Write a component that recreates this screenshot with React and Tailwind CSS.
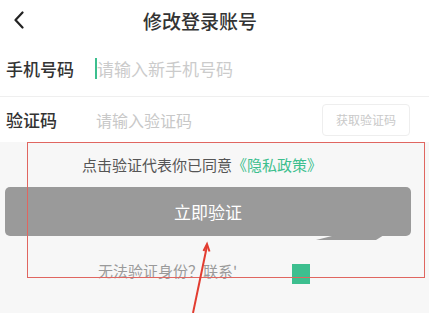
export default function App() {
  const font = { fontFamily: '"Noto Sans CJK SC", "Noto Sans", sans-serif' };
  return (
    <div className="relative w-[429px] h-[313px] overflow-hidden bg-[#f7f7f7]" style={font}>
      <div className="bg-white">
        <div className="h-[40px] flex items-center">
          <svg width="12" height="18" viewBox="0 0 12 18" className="ml-[13px]">
            <path d="M9.5 1.5 L2.5 9 L9.5 16.5" fill="none" stroke="#222" strokeWidth="2.2" strokeLinecap="round" strokeLinejoin="round" />
          </svg>
          <div className="ml-[118px] text-[19px] leading-none font-medium text-[#333]">修改登录账号</div>
        </div>
        <div className="h-[56px] flex items-center">
          <div className="pl-[6px] w-[95px] text-[17px] leading-none font-medium text-[#333]">手机号码</div>
          <div className="w-[2px] h-[21px] bg-[#3cbf8e]"></div>
          <div className="text-[17px] leading-none text-[#cbcbcb]">请输入新手机号码</div>
        </div>
        <div className="h-px bg-[#efefef]"></div>
        <div className="h-[45px] flex items-center">
          <div className="pl-[6px] w-[96px] text-[17px] leading-none font-medium text-[#333]">验证码</div>
          <div className="text-[16px] leading-none text-[#c8c8c8]">请输入验证码</div>
          <div className="ml-auto mr-[19px] w-[88px] h-[32px] rounded-[4px] border border-[#eeeeee] flex items-center justify-center text-[12px] text-[#c9c9c9]">获取验证码</div>
        </div>
      </div>
      <div className="pt-[11px]">
        <div className="pl-[82px] h-[22px] flex items-center text-[15px] leading-none text-[#555]">
          点击验证代表你已同意<span className="text-[#3cbf8e]">《隐私政策》</span>
        </div>
        <div className="relative mt-[12px] ml-[5px] mr-[18px] h-[49px] rounded-[5px] bg-[#9a9a9a] flex items-center justify-center text-[17px] text-white">
          立即验证
          <svg className="absolute left-[311px] top-[48px]" width="68" height="6" viewBox="0 0 68 6">
            <polygon points="0,5 20,0 58,0 68,0 60,5" fill="#9a9a9a" />
          </svg>
        </div>
        <div className="mt-[23px] pl-[98px] h-[22px] flex items-center text-[15px] leading-none text-[#9a9a9a]">
          <span>无法验证身份？联系'</span>
          <div className="ml-[55px] w-[18px] h-[20px] bg-[#3dbf8f] mt-[7px]"></div>
        </div>
      </div>
      <div className="absolute left-[27px] top-[142px] w-[398px] h-[136px] border-[1.5px] border-[#e06660] pointer-events-none"></div>
      <svg className="absolute left-0 top-0 pointer-events-none" width="429" height="313" viewBox="0 0 429 313">
        <line x1="193" y1="313" x2="207" y2="246" stroke="#e23c30" strokeWidth="2" />
        <polyline points="203.5,251 207,244 209.5,251.5" fill="none" stroke="#e23c30" strokeWidth="2" />
      </svg>
    </div>
  );
}
